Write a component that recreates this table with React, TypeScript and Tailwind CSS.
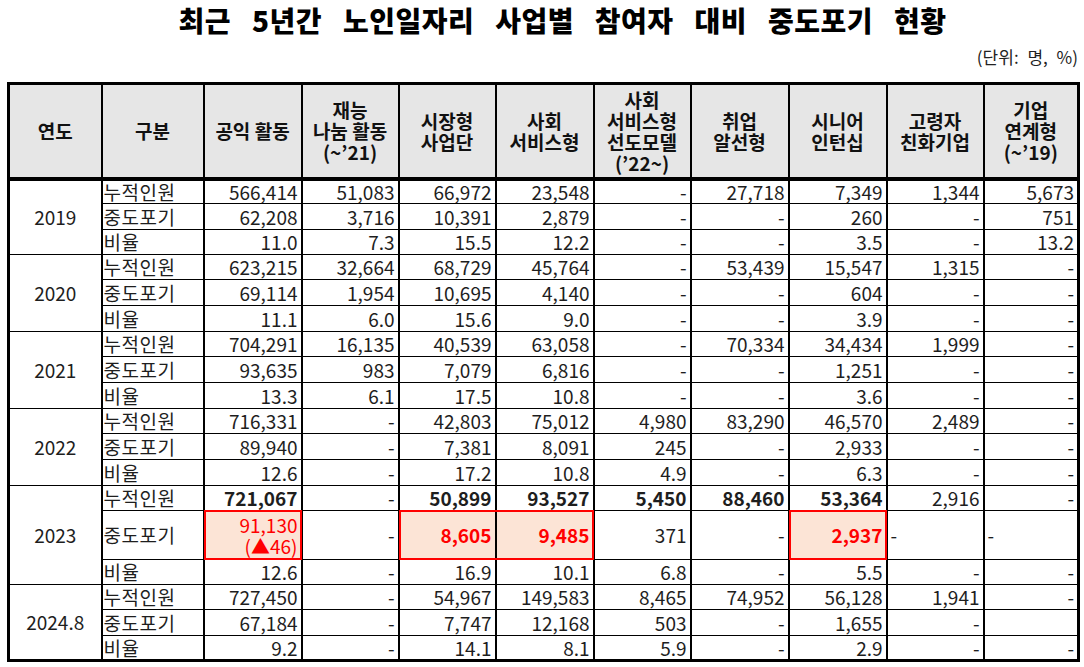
import React from 'react';

type C = { v: string; two?: string; b?: boolean; semi?: boolean; red?: boolean; left?: boolean; hl?: 'all' | 'l' | 'r' };
type Val = string | C;

const groups: { year: string; h: [string, string, string]; rows: [string, Val[]][] }[] = [
  {
    year: '2019',
    h: ['h-[25px]', 'h-[26px]', 'h-[25px]'],
    rows: [
      ['누적인원', ['566,414', '51,083', '66,972', '23,548', '-', '27,718', '7,349', '1,344', '5,673']],
      ['중도포기', ['62,208', '3,716', '10,391', '2,879', '-', '-', '260', '-', '751']],
      ['비율', ['11.0', '7.3', '15.5', '12.2', '-', '-', '3.5', '-', '13.2']],
    ],
  },
  {
    year: '2020',
    h: ['h-[25px]', 'h-[26px]', 'h-[26px]'],
    rows: [
      ['누적인원', ['623,215', '32,664', '68,729', '45,764', '-', '53,439', '15,547', '1,315', '-']],
      ['중도포기', ['69,114', '1,954', '10,695', '4,140', '-', '-', '604', '-', '-']],
      ['비율', ['11.1', '6.0', '15.6', '9.0', '-', '-', '3.9', '-', '-']],
    ],
  },
  {
    year: '2021',
    h: ['h-[25px]', 'h-[26px]', 'h-[26px]'],
    rows: [
      ['누적인원', ['704,291', '16,135', '40,539', '63,058', '-', '70,334', '34,434', '1,999', '-']],
      ['중도포기', ['93,635', '983', '7,079', '6,816', '-', '-', '1,251', '-', '-']],
      ['비율', ['13.3', '6.1', '17.5', '10.8', '-', '-', '3.6', '-', '-']],
    ],
  },
  {
    year: '2022',
    h: ['h-[25px]', 'h-[26px]', 'h-[26px]'],
    rows: [
      ['누적인원', ['716,331', '-', '42,803', '75,012', '4,980', '83,290', '46,570', '2,489', '-']],
      ['중도포기', ['89,940', '-', '7,381', '8,091', '245', '-', '2,933', '-', '-']],
      ['비율', ['12.6', '-', '17.2', '10.8', '4.9', '-', '6.3', '-', '-']],
    ],
  },
  {
    year: '2023',
    h: ['h-[25px]', 'h-[49px]', 'h-[25px]'],
    rows: [
      [
        '누적인원',
        [
          { v: '721,067', b: true },
          '-',
          { v: '50,899', b: true },
          { v: '93,527', b: true },
          { v: '5,450', b: true },
          { v: '88,460', b: true },
          { v: '53,364', b: true },
          '2,916',
          '-',
        ],
      ],
      [
        '중도포기',
        [
          { v: '91,130', two: '(▲46)', red: true, hl: 'all' },
          '-',
          { v: '8,605', red: true, semi: true, hl: 'l' },
          { v: '9,485', red: true, semi: true, hl: 'r' },
          '371',
          '-',
          { v: '2,937', red: true, semi: true, hl: 'all' },
          { v: '-', left: true },
          { v: '-', left: true },
        ],
      ],
      ['비율', ['12.6', '-', '16.9', '10.1', '6.8', '-', '5.5', '-', '-']],
    ],
  },
  {
    year: '2024.8',
    h: ['h-[25px]', 'h-[26px]', 'h-[25px]'],
    rows: [
      ['누적인원', ['727,450', '-', '54,967', '149,583', '8,465', '74,952', '56,128', '1,941', '-']],
      ['중도포기', ['67,184', '-', '7,747', '12,168', '503', '-', '1,655', '-', '']],
      ['비율', ['9.2', '-', '14.1', '8.1', '5.9', '-', '2.9', '-', '-']],
    ],
  },
];

const widths = [93, 102, 98, 97, 97, 98, 97, 98, 98, 97, 95];

const headers: string[][] = [
  ['연도'],
  ['구분'],
  ['공익 활동'],
  ['재능', '나눔 활동', '(~’21)'],
  ['시장형', '사업단'],
  ['사회', '서비스형'],
  ['사회', '서비스형', '선도모델', '(’22~)'],
  ['취업', '알선형'],
  ['시니어', '인턴십'],
  ['고령자', '친화기업'],
  ['기업', '연계형', '(~’19)'],
];

const cellBase = 'border-x-2 border-y border-black p-0 text-[19px] leading-[22px] text-[#1e1e1e] whitespace-nowrap';

function Cell({ c }: { c: Val }) {
  const o: C = typeof c === 'string' ? { v: c } : c;
  const hlBorder =
    o.hl === 'all'
      ? 'border-2'
      : o.hl === 'l'
      ? 'border-y-2 border-l-2'
      : o.hl === 'r'
      ? 'border-y-2 border-r-2'
      : '';
  return (
    <td
      className={`${cellBase} ${o.left ? 'text-left pl-[3px]' : 'text-right pr-[3px]'} ${
        o.hl ? 'relative bg-[#fce4d6]' : ''
      } ${o.red ? 'text-[#ff0000]' : ''} ${o.b ? 'font-bold' : ''} ${o.semi ? 'font-semibold' : ''}`}
    >
      {o.two ? (
        <div className="flex flex-col items-end leading-[21px]">
          <span>{o.v}</span>
          <span>{o.two}</span>
        </div>
      ) : (
        o.v
      )}
      {o.hl && (
        <span className={`pointer-events-none absolute -inset-[1px] border-[#ff0000] ${hlBorder}`} />
      )}
    </td>
  );
}

export default function App() {
  return (
    <div className="w-[1084px] h-[667px] bg-white overflow-hidden font-['Noto_Sans_CJK_KR','Noto_Sans',sans-serif] text-black">
      <h1 className="pl-[41px] pt-[1px] text-center text-[28px] leading-[38px] font-black [word-spacing:14px] tracking-[0.5px]">
        최근 5년간 노인일자리 사업별 참여자 대비 중도포기 현황
      </h1>
      <div className="mt-[7px] flex justify-end pr-[6px] text-[17px] leading-[22px] text-[#222] [word-spacing:5px]">
        (단위: 명, %)
      </div>
      <div className="mt-[14px] pl-[7px]">
        <table className="table-fixed border-collapse border-[3px] border-black w-[1070px]">
          <colgroup>
            {widths.map((w, i) => (
              <col key={i} style={{ width: w }} />
            ))}
          </colgroup>
          <thead>
            <tr className="h-[95px]">
              {headers.map((h, i) => (
                <th
                  key={i}
                  className="border-x-2 border-t border-b-[4px] border-b-double border-black bg-[#e6e6e6] p-0 text-center align-middle text-[19px] leading-[21px] font-bold text-[#111] whitespace-nowrap"
                >
                  {h.map((line, j) => (
                    <div key={j}>{line}</div>
                  ))}
                </th>
              ))}
            </tr>
          </thead>
          <tbody>
            {groups.map((g) =>
              g.rows.map(([label, vals], ri) => (
                <tr key={g.year + ri} className={g.h[ri]}>
                  {ri === 0 && (
                    <td rowSpan={3} className={`${cellBase} text-center align-middle`}>
                      {g.year}
                    </td>
                  )}
                  <td className={`${cellBase} text-left pl-[1px] tracking-[0.5px]`}>{label}</td>
                  {vals.map((v, ci) => (
                    <Cell key={ci} c={v} />
                  ))}
                </tr>
              ))
            )}
          </tbody>
        </table>
      </div>
    </div>
  );
}
